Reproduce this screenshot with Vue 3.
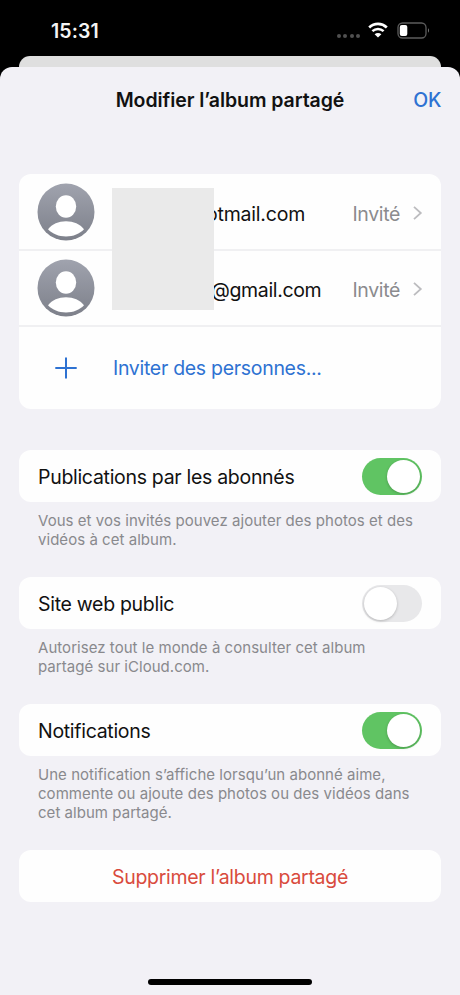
<script setup>
import { reactive } from 'vue'

const guests = [
  { id: 1, mail: 'otmail.com', cls: 'mail-hot', status: 'Invité' },
  { id: 2, mail: '@gmail.com', cls: 'mail-g', status: 'Invité' }
]

const settings = reactive([
  {
    id: 'posts', label: 'Publications par les abonnés', on: true,
    lines: ['Vous et vos invités pouvez ajouter des photos et des', 'vidéos à cet album.']
  },
  {
    id: 'site', label: 'Site web public', on: false,
    lines: ['Autorisez tout le monde à consulter cet album', 'partagé sur iCloud.com.']
  },
  {
    id: 'notif', label: 'Notifications', on: true,
    lines: ['Une notification s’affiche lorsqu’un abonné aime,', 'commente ou ajoute des photos ou des vidéos dans', 'cet album partagé.']
  }
])
</script>

<template>
  <div class="phone">
    <header class="status">
      <span class="time">15:31</span>
      <span class="signal"><i v-for="n in 4" :key="n"></i></span>
      <svg class="wifi" width="20" height="16" viewBox="0 0 20 16">
        <path d="M1.2 5.4C6.2.7 13.8.7 18.8 5.4" fill="none" stroke="#fff" stroke-width="2.7" />
        <path d="M4.4 9.1c3.2-2.900 8-2.900 11.200 0" fill="none" stroke="#fff" stroke-width="2.500" />
        <path d="M10 15.400 6.600 12.200c1.900-1.700 4.900-1.700 6.800 0z" fill="#fff" />
      </svg>
      <svg class="battery" width="33" height="17" viewBox="0 0 33 17">
        <rect x="1" y="1" width="28" height="15" rx="4.5" fill="none" stroke="#5c5c5c" stroke-width="1.3" />
        <path d="M31 6.3c1.300.6 1.300 3.800 0 4.400z" fill="#777" />
        <rect x="2.8" y="3" width="7.5" height="11" rx="2" fill="#fff" />
      </svg>
    </header>
    <div class="back-sheet"></div>
    <main class="sheet">
      <div class="nav">
        <h1>Modifier l’album partagé</h1>
        <a class="ok">OK</a>
      </div>

      <section class="card people">
        <div v-for="g in guests" :key="g.id" class="guest">
          <svg class="avatar" width="58" height="58" viewBox="0 0 58 58">
            <defs>
              <linearGradient :id="'av' + g.id" x1="0" y1="0" x2="0" y2="1">
                <stop offset="0" stop-color="#a0a3ae" />
                <stop offset="1" stop-color="#7d808a" />
              </linearGradient>
            </defs>
            <circle cx="29" cy="29" r="28.5" :fill="'url(#av' + g.id + ')'" />
            <ellipse cx="29" cy="23.5" rx="10.2" ry="11.2" fill="#fff" />
            <path d="M11 46.3C15 41 21.500 38.300 29 38.300s14 2.700 18 8C42.500 51 36.500 53.500 29 53.500S15.500 51 11 46.300z" fill="#fff" />
          </svg>
          <span class="mail" :class="g.cls">{{ g.mail }}</span>
          <span class="state">{{ g.status }}</span>
          <svg class="chevron" width="10" height="16" viewBox="0 0 10 16">
            <path d="M1 1.800 7.800 8 1 14.200" fill="none" stroke="#bcbcbf" stroke-width="1.800" />
          </svg>
        </div>
        <div class="invite">
          <svg class="plus" width="22" height="22" viewBox="0 0 22 22">
            <path d="M11 .6v20.800M.3 11h21.400" stroke="#2e72d2" stroke-width="2" />
          </svg>
          <span class="invite-label">Inviter des personnes...</span>
        </div>
        <div class="mask"></div>
      </section>

      <section v-for="s in settings" :key="s.id" class="group">
        <div class="card option">
          <span class="label">{{ s.label }}</span>
          <button class="switch" :class="{ on: s.on }" role="switch" :aria-checked="s.on" @click="s.on = !s.on"><i></i></button>
        </div>
        <p class="note">
          <span v-for="l in s.lines" :key="l" class="line">{{ l }}</span>
        </p>
      </section>

      <div class="card delete">Supprimer l’album partagé</div>
      <div class="home"></div>
    </main>
  </div>
</template>

<style>
body { background: #000; }
</style>

<style scoped>
* { box-sizing: border-box; }
.phone {
  width: 460px;
  height: 995px;
  background: #000;
  display: flex;
  flex-direction: column;
  overflow: hidden;
  font-family: Inter, "Liberation Sans", sans-serif;
  font-size: 19.5px;
  letter-spacing: -0.3px;
  color: #111;
  white-space: nowrap;
}
.status {
  height: 56px;
  flex: none;
  display: flex;
  align-items: flex-start;
  padding: 19px 30px 0 51px;
  color: #f4f4f4;
}
.time { font-size: 19.5px; font-weight: 600; line-height: 24px; flex: 1; letter-spacing: 0.1px; }
.signal { display: flex; gap: 2.3px; margin: 15px 8px 0 0; }
.signal i { width: 4px; height: 4px; border-radius: 50%; background: #505050; }
.wifi { margin: 3px 9px 0 0; }
.battery { margin-top: 3px; }
.back-sheet {
  height: 11px;
  flex: none;
  margin: 0 19px;
  background: #dfdfdf;
  border-radius: 11px 11px 0 0;
}
.sheet {
  flex: 1;
  background: #f2f1f6;
  border-radius: 12px 12px 0 0;
  padding: 0 19px;
  display: flex;
  flex-direction: column;
}
.nav {
  height: 107px;
  flex: none;
  display: grid;
  grid-template-columns: 60px 1fr 60px;
  padding-top: 21px;
  line-height: 25px;
}
.nav h1 {
  margin: 0;
  font-size: 19.5px;
  font-weight: 600;
  text-align: center;
  grid-column: 2;
  letter-spacing: -0.07px;
}
.ok { color: #2e72d2; font-weight: 500; text-align: right; }
.card { background: #fefefe; border-radius: 12px; flex: none; }
.people { position: relative; height: 235px; margin-bottom: 41px; }
.guest {
  height: 76px;
  display: flex;
  align-items: center;
  border-bottom: 2px solid #f0f0f2;
  padding: 0 18px;
}
.guest:first-child { height: 77px; padding-top: 1px; }
.mail { margin-left: 116px; flex: 1; line-height: 26px; padding-top: 4px; letter-spacing: -0.35px; }
.mail-hot { margin-left: 111px; letter-spacing: -0.2px; }
.state { color: #8b8b8e; line-height: 26px; padding-top: 4px; margin-right: 13px; letter-spacing: -0.35px; }
.chevron { flex: none; margin-top: 1px; }
.avatar { flex: none; }
.invite { height: 82px; display: flex; align-items: center; padding-left: 36px; color: #2e72d2; }
.invite-label { margin-left: 36px; }
.mask {
  position: absolute;
  left: 93px;
  top: 14px;
  width: 102px;
  height: 122px;
  background: #eaeaea;
}
.option {
  height: 52px;
  display: flex;
  align-items: center;
  justify-content: space-between;
  padding: 0 19px;
}
.label { padding-top: 2px; }
.switch {
  width: 60px;
  height: 37px;
  border: 0;
  padding: 2px;
  border-radius: 19px;
  background: #e8e8ea;
  display: flex;
}
.switch i {
  width: 33px;
  height: 33px;
  border-radius: 50%;
  background: #fff;
  box-shadow: 0 1px 3px rgba(0, 0, 0, 0.22);
}
.switch.on { background: #60c463; justify-content: flex-end; }
.note {
  margin: 9px 0 28px 19px;
  font-size: 15px;
  line-height: 19px;
  letter-spacing: 0.04px;
  color: #89898d;
}
.line { display: block; }
.delete {
  height: 52px;
  color: #d94b3d;
  display: flex;
  align-items: center;
  justify-content: center;
  padding-top: 1px;
}
.home {
  width: 164px;
  height: 6px;
  border-radius: 3px;
  background: #000;
  margin: auto auto 10px;
}
</style>
